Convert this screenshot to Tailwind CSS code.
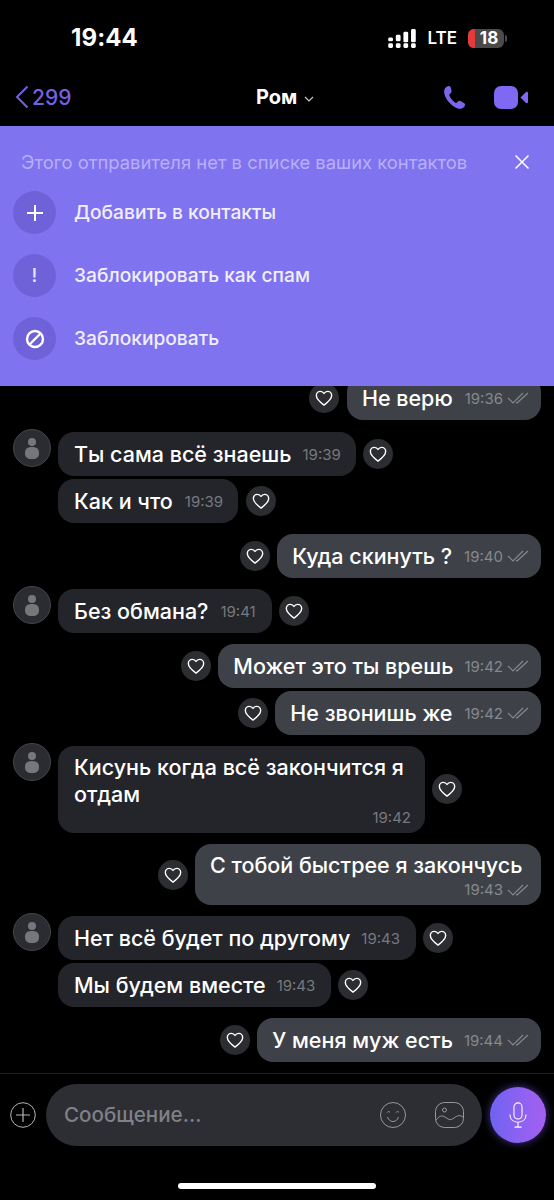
<!DOCTYPE html>
<html lang="ru">
<head>
    <meta charset="UTF-8">
    <meta name="viewport" content="width=device-width, initial-scale=1.0">
    <title>Чат</title>
    <script src="https://cdn.jsdelivr.net/npm/@tailwindcss/browser@4"></script>
</head>
<body class="bg-black">
<svg class="hidden">
    <symbol id="heart" viewBox="0 0 24 24"><path d="M12 20.5C7 16.8 2.8 13.4 2.8 9c0-3 2.300-5 4.900-5 1.900 0 3.400 1 4.300 2.600C12.900 5 14.400 4 16.300 4c2.600 0 4.900 2 4.900 5 0 4.400-4.200 7.800-9.200 11.500z" fill="none" stroke="currentColor" stroke-width="1.700" stroke-linejoin="round"/></symbol>
    <symbol id="checks" viewBox="0 0 22 14"><path d="M1 7l5 5L16 2M9 11.500l1 .5L21 2" fill="none" stroke="currentColor" stroke-width="1.200"/></symbol>
    <symbol id="avatar" viewBox="0 0 38 38"><circle cx="19" cy="19" r="18.500" fill="#2a2c31" stroke="#45474c"/><circle cx="19" cy="13" r="4" fill="#75777b"/><path d="M12 24c0-4 2-6 7-6s7 2 7 6-2 6-7 6-7-2-7-6z" fill="#75777b"/></symbol>
</svg>
<div class="w-[554px] h-[1200px] flex flex-col overflow-hidden bg-black text-white font-['Inter','Liberation_Sans',sans-serif]">

    <!-- status bar -->
    <div class="h-[75px] shrink-0 flex items-center pt-[1px] pl-[71px] pr-[47px]">
        <span class="text-[24px] font-bold leading-none tracking-[0.1px]">19:44</span>
        <svg class="ml-auto" width="28" height="19" viewBox="0 0 29 20" fill="#fff">
            <rect x="0" y="9" width="5" height="4" rx="1.500"/><rect x="0" y="15" width="5" height="5" rx="1.500"/>
            <rect x="8" y="6" width="5" height="7" rx="1.500"/><rect x="8" y="15" width="5" height="5" rx="1.500"/>
            <rect x="16" y="3" width="5" height="11" rx="1.500"/><rect x="16" y="15" width="5" height="5" rx="1.500"/>
            <rect x="24" y="0" width="5" height="14" rx="1.500"/><rect x="24" y="15" width="5" height="5" rx="1.500"/>
        </svg>
        <span class="ml-[11px] text-[17px] font-semibold leading-none">LTE</span>
        <div class="ml-[11px] relative w-[36px] h-[19px] rounded-[6px] bg-[#4a4a4a] overflow-hidden flex items-center justify-center pl-[6px]">
            <div class="absolute left-0 top-0 bottom-0 w-[7px] bg-[#e5393a]"></div>
            <span class="relative text-[17px] font-bold leading-none">18</span>
        </div>
        <div class="ml-[1px] w-[2px] h-[7px] rounded-r-sm bg-[#4a4a4a]"></div>
    </div>

    <!-- nav -->
    <div class="h-[51px] shrink-0 flex items-center relative pl-[15px] pr-[26px] pb-[7px]">
        <svg width="14" height="24" viewBox="0 0 14 24"><path d="M12.500 1.500L2 12l10.500 10.500" fill="none" stroke="#7461e2" stroke-width="2"/></svg>
        <span class="ml-[3px] text-[21px] font-medium leading-none text-[#7461e2]">299</span>
        <div class="absolute left-[256px] top-[12px] flex items-center">
            <span class="text-[20px] font-bold leading-none">Ром</span>
            <svg class="ml-[7px] mt-[3px]" width="10" height="6" viewBox="0 0 10 6"><path d="M1 1l4 4 4-4" fill="none" stroke="#c9c9c9" stroke-width="1.200"/></svg>
        </div>
        <svg class="ml-auto" width="24" height="25" viewBox="0 0 24 25"><path d="M6.500 1C4.500 1.500 2.500 3 2.200 5.200c-.5 4 1.800 8.500 4.800 12 3.200 3.600 7.500 6.500 11 6.600 2.400.1 4.300-1.600 5-3.600.2-.8 0-1.500-.7-2l-3.800-2.300c-.7-.4-1.400-.3-2 .2l-1.500 1.500c-.5.4-1.100.4-1.600.1-2.800-1.800-4.700-4.200-6-7.200-.2-.6-.1-1.100.3-1.500l1.400-1.300c.5-.5.6-1.200.4-1.900L8.600 2C8.200 1.200 7.400.8 6.500 1z" fill="#7a66ea"/></svg>
        <svg class="ml-[28px]" width="34" height="23" viewBox="0 0 34 23"><rect x="0" y="0" width="24" height="23" rx="7" fill="#7f69f3"/><path d="M26.500 11.500l5.500-5.500c.8-.6 2-.2 2 1v9c0 1.200-1.200 1.600-2 1z" fill="#7f69f3"/></svg>
    </div>

    <!-- unknown sender banner -->
    <div class="h-[260px] shrink-0 bg-[#8073f0] pt-[24px] pl-[13px] pr-[24px] z-10">
        <div class="flex items-center justify-between pl-[8px]">
            <span class="text-[18.400px] leading-[24px] font-normal text-[#b7aff7] whitespace-nowrap">Этого отправителя нет в списке ваших контактов</span>
            <svg width="16" height="16" viewBox="0 0 16 16"><path d="M1.500 1.500l13 13M14.500 1.500l-13 13" stroke="#fff" stroke-width="1.500"/></svg>
        </div>
        <div class="mt-[17px] flex flex-col gap-[20px]">
            <div class="flex items-center gap-[18px]">
                <div class="w-[43px] h-[43px] rounded-full bg-[#6f62d9] flex items-center justify-center">
                    <svg width="18" height="18" viewBox="0 0 18 18"><path d="M9 1v16M1 9h16" stroke="#fff" stroke-width="2"/></svg>
                </div>
                <span class="text-[19.200px] font-medium text-[#f1effd]">Добавить в контакты</span>
            </div>
            <div class="flex items-center gap-[18px]">
                <div class="w-[43px] h-[43px] rounded-full bg-[#6f62d9] flex items-center justify-center">
                    <span class="text-[19px] font-medium leading-none text-[#e8e5fc]">!</span>
                </div>
                <span class="text-[19.200px] font-medium text-[#f1effd]">Заблокировать как спам</span>
            </div>
            <div class="flex items-center gap-[18px]">
                <div class="w-[43px] h-[43px] rounded-full bg-[#6f62d9] flex items-center justify-center">
                    <svg width="20" height="20" viewBox="0 0 20 20"><circle cx="10" cy="10" r="8" fill="none" stroke="#fff" stroke-width="2.400"/><path d="M15.500 4.500l-11 11" stroke="#fff" stroke-width="2.400"/></svg>
                </div>
                <span class="text-[19.200px] font-medium text-[#f1effd]">Заблокировать</span>
            </div>
        </div>
    </div>

    <!-- messages -->
    <div class="h-[687px] shrink-0 overflow-hidden flex flex-col pl-[13px] pr-[13px] text-[21.500px] font-medium leading-[27px]">

        <div class="self-end flex items-center gap-[8px] mt-[-10px]">
            <div class="w-[30px] h-[30px] rounded-full bg-[#2c2d31] flex items-center justify-center mt-[-1px]"><svg class="text-white" width="20" height="20"><use href="#heart"/></svg></div>
            <div class="h-[44px] rounded-[16px] bg-[#3e4248] pl-[15px] pr-[12px] flex items-center">Не верю<span class="ml-[12px] text-[15px] font-normal text-[#85888d]">19:36</span><svg class="ml-[4px] text-[#85888d]" width="22" height="14"><use href="#checks"/></svg></div>
        </div>

        <div class="flex items-start mt-[12px]">
            <svg class="mr-[7px] mt-[-3px]" width="38" height="38"><use href="#avatar"/></svg>
            <div class="h-[44px] rounded-[16px] bg-[#24252b] pl-[16px] pr-[15px] flex items-center">Ты сама всё знаешь<span class="ml-[11px] text-[15px] font-normal text-[#77797e]">19:39</span></div>
            <div class="ml-[7px] mt-[7px] w-[30px] h-[30px] rounded-full bg-[#2c2d31] flex items-center justify-center"><svg class="text-white" width="20" height="20"><use href="#heart"/></svg></div>
        </div>
        <div class="flex items-center ml-[45px] mt-[3px]">
            <div class="h-[44px] rounded-[16px] bg-[#24252b] pl-[16px] pr-[15px] flex items-center">Как и что<span class="ml-[12px] text-[15px] font-normal text-[#77797e]">19:39</span></div>
            <div class="ml-[8px] w-[30px] h-[30px] rounded-full bg-[#2c2d31] flex items-center justify-center"><svg class="text-white" width="20" height="20"><use href="#heart"/></svg></div>
        </div>

        <div class="self-end flex items-center gap-[7px] mt-[11px]">
            <div class="w-[30px] h-[30px] rounded-full bg-[#2c2d31] flex items-center justify-center"><svg class="text-white" width="20" height="20"><use href="#heart"/></svg></div>
            <div class="h-[44px] rounded-[16px] bg-[#3e4248] pl-[15px] pr-[12px] flex items-center">Куда скинуть ?<span class="ml-[12px] text-[15px] font-normal text-[#85888d]">19:40</span><svg class="ml-[4px] text-[#85888d]" width="22" height="14"><use href="#checks"/></svg></div>
        </div>

        <div class="flex items-start mt-[11px]">
            <svg class="mr-[7px] mt-[-3px]" width="38" height="38"><use href="#avatar"/></svg>
            <div class="h-[44px] rounded-[16px] bg-[#24252b] pl-[16px] pr-[16px] flex items-center">Без обмана?<span class="ml-[12px] text-[15px] font-normal text-[#77797e]">19:41</span></div>
            <div class="ml-[7px] mt-[7px] w-[30px] h-[30px] rounded-full bg-[#2c2d31] flex items-center justify-center"><svg class="text-white" width="20" height="20"><use href="#heart"/></svg></div>
        </div>

        <div class="self-end flex items-center gap-[7px] mt-[11px]">
            <div class="w-[30px] h-[30px] rounded-full bg-[#2c2d31] flex items-center justify-center"><svg class="text-white" width="20" height="20"><use href="#heart"/></svg></div>
            <div class="h-[44px] rounded-[16px] bg-[#3e4248] pl-[15px] pr-[12px] flex items-center">Может это ты врешь<span class="ml-[11px] text-[15px] font-normal text-[#85888d]">19:42</span><svg class="ml-[4px] text-[#85888d]" width="22" height="14"><use href="#checks"/></svg></div>
        </div>
        <div class="self-end flex items-center gap-[7px] mt-[3px]">
            <div class="w-[30px] h-[30px] rounded-full bg-[#2c2d31] flex items-center justify-center"><svg class="text-white" width="20" height="20"><use href="#heart"/></svg></div>
            <div class="h-[44px] rounded-[16px] bg-[#3e4248] pl-[15px] pr-[12px] flex items-center">Не звонишь же<span class="ml-[12px] text-[15px] font-normal text-[#85888d]">19:42</span><svg class="ml-[4px] text-[#85888d]" width="22" height="14"><use href="#checks"/></svg></div>
        </div>

        <div class="flex items-start mt-[11px]">
            <svg class="mr-[7px] mt-[-3px]" width="38" height="38"><use href="#avatar"/></svg>
            <div class="w-[367px] h-[87px] rounded-[16px] bg-[#24252b] pl-[16px] pr-[14px] pt-[8px] relative">Кисунь когда всё закончится я отдам
                <span class="absolute right-[14px] bottom-[5px] text-[15px] leading-[20px] font-normal text-[#77797e]">19:42</span>
            </div>
            <div class="ml-[7px] mt-[28px] w-[30px] h-[30px] rounded-full bg-[#2c2d31] flex items-center justify-center"><svg class="text-white" width="20" height="20"><use href="#heart"/></svg></div>
        </div>

        <div class="self-end flex items-center gap-[7px] mt-[11px]">
            <div class="w-[30px] h-[30px] rounded-full bg-[#2c2d31] flex items-center justify-center"><svg class="text-white" width="20" height="20"><use href="#heart"/></svg></div>
            <div class="w-[346px] h-[61px] rounded-[16px] bg-[#3e4248] pl-[15px] pr-[12px] pt-[8px] relative whitespace-nowrap">С тобой быстрее я закончусь
                <div class="absolute right-[12px] bottom-[5px] flex items-center"><span class="text-[15px] leading-[20px] font-normal text-[#85888d]">19:43</span><svg class="ml-[4px] text-[#85888d]" width="22" height="14"><use href="#checks"/></svg></div>
            </div>
        </div>

        <div class="flex items-start mt-[11px]">
            <svg class="mr-[7px] mt-[-3px]" width="38" height="38"><use href="#avatar"/></svg>
            <div class="h-[44px] rounded-[16px] bg-[#24252b] pl-[16px] pr-[16px] flex items-center">Нет всё будет по другому<span class="ml-[11px] text-[15px] font-normal text-[#77797e]">19:43</span></div>
            <div class="ml-[7px] mt-[7px] w-[30px] h-[30px] rounded-full bg-[#2c2d31] flex items-center justify-center"><svg class="text-white" width="20" height="20"><use href="#heart"/></svg></div>
        </div>
        <div class="flex items-center ml-[45px] mt-[3px]">
            <div class="h-[44px] rounded-[16px] bg-[#24252b] pl-[16px] pr-[16px] flex items-center">Мы будем вместе<span class="ml-[11px] text-[15px] font-normal text-[#77797e]">19:43</span></div>
            <div class="ml-[7px] w-[30px] h-[30px] rounded-full bg-[#2c2d31] flex items-center justify-center"><svg class="text-white" width="20" height="20"><use href="#heart"/></svg></div>
        </div>

        <div class="self-end flex items-center gap-[7px] mt-[11px]">
            <div class="w-[30px] h-[30px] rounded-full bg-[#2c2d31] flex items-center justify-center"><svg class="text-white" width="20" height="20"><use href="#heart"/></svg></div>
            <div class="h-[44px] rounded-[16px] bg-[#3e4248] pl-[15px] pr-[12px] flex items-center">У меня муж есть<span class="ml-[11px] text-[15px] font-normal text-[#85888d]">19:44</span><svg class="ml-[4px] text-[#85888d]" width="22" height="14"><use href="#checks"/></svg></div>
        </div>
    </div>

    <!-- composer -->
    <div class="border-t border-[#1f2024] flex items-center pt-[10px] pl-[10px] pr-[8px] h-[73px] shrink-0">
        <svg width="26" height="26" viewBox="0 0 26 26"><circle cx="13" cy="13" r="12.300" fill="none" stroke="#b5b5b5" stroke-width="1"/><path d="M13 6v14M6 13h14" stroke="#b5b5b5" stroke-width="1.200"/></svg>
        <div class="ml-[10px] w-[436px] h-[62px] rounded-[31px] bg-[#2c2e33] flex items-center pl-[18px] pr-[18px]">
            <span class="text-[20.600px] font-medium text-[#7f8186]">Сообщение...</span>
            <svg class="ml-auto" width="26" height="26" viewBox="0 0 26 26" fill="none" stroke="#96989b" stroke-width="1"><circle cx="13" cy="13" r="12.500"/><path d="M7 10.500c.8-1.200 2.200-1.200 3 0M16 10.500c.8-1.200 2.200-1.200 3 0M7.500 15c1 3 3 4.500 5.500 4.500s4.500-1.500 5.500-4.500"/></svg>
            <svg class="ml-[29px]" width="29" height="26" viewBox="0 0 29 26" fill="none" stroke="#96989b" stroke-width="1"><rect x=".5" y=".5" width="28" height="25" rx="9"/><circle cx="9.500" cy="8" r="2"/><path d="M1 18c3-4 6-5 9-3s5 4 9 1 6-3 9-1"/></svg>
        </div>
        <div class="ml-[8px] w-[56px] h-[56px] rounded-full bg-gradient-to-r from-[#6f63f2] to-[#a45ff0] shadow-[0_0_8px_rgba(120,90,240,0.6)] flex items-center justify-center">
            <svg width="18" height="26" viewBox="0 0 20 29" fill="none" stroke="#fff" stroke-width="1.200"><rect x="5.500" y="1" width="9" height="18" rx="4.500"/><path d="M1 14c0 5.500 4 8.500 9 8.500s9-3 9-8.500M10 22.500V28M6 28h8"/></svg>
        </div>
    </div>

    <!-- home indicator -->
    <div class="flex-1 flex justify-center">
        <div class="mt-[37px] w-[198px] h-[6px] rounded-full bg-white"></div>
    </div>
</div>
</body>
</html>
